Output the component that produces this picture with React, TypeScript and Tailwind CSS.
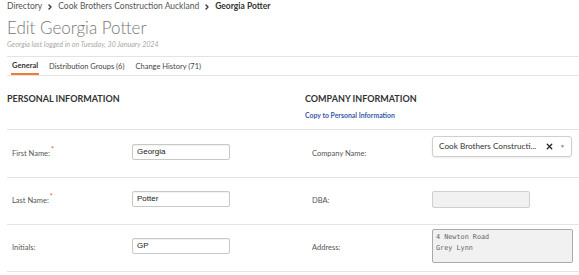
import { ChevronRight, X } from 'lucide-react'

const leftRows = [
  { label: 'First Name:', value: 'Georgia', required: true, h: 'h-[48px] border-t' },
  { label: 'Last Name:', value: 'Potter', required: true, h: 'h-[47px] border-t' },
  { label: 'Initials:', value: 'GP', required: false, h: 'h-[48px] border-y' },
]

const Label = ({ text, required }: { text: string; required?: boolean }) => (
  <span className="relative w-[120px] shrink-0 text-[7.5px] text-[#555]">
    {text}
    {required && <span className="absolute -top-[4px] ml-[1px] text-[7px] text-[#e8572a]">*</span>}
  </span>
)

const TextInput = ({ value }: { value: string }) => (
  <div className="mb-[4px] flex h-[16px] w-[98px] items-center rounded-[2px] border border-[#c8c8c8] bg-white px-[4px] font-['Liberation_Sans',Arial,sans-serif] text-[8px] text-[#222] shadow-[inset_0_1px_1px_rgba(0,0,0,0.06)]">
    {value}
  </div>
)

export default function App() {
  return (
    <div className="h-[275px] w-[579px] overflow-hidden bg-white font-['Lato','Open_Sans',sans-serif]">
      <div className="pl-[7px]">
        <div className="flex h-[13px] items-center gap-[4px] text-[8.5px] text-[#555]">
          <span>Directory</span>
          <ChevronRight className="h-[8px] w-[8px] text-[#333]" strokeWidth={4} />
          <span>Cook Brothers Construction Auckland</span>
          <ChevronRight className="h-[8px] w-[8px] text-[#333]" strokeWidth={4} />
          <span className="font-bold text-[#333]">Georgia Potter</span>
        </div>
        <h1 className="mt-[3px] h-[24px] text-[17px] font-light leading-[24px] text-[#777]">Edit Georgia Potter</h1>
        <p className="h-[10px] text-[7.1px] italic leading-[10px] text-[#aaa]">
          Georgia last logged in on Tuesday, 30 January 2024
        </p>
      </div>

      <div className="ml-[7px] mt-[6px] flex h-[20px] items-stretch border-y border-[#e3e3e3] pl-[4px] text-[7.5px] text-[#444]">
        <span className="flex items-center border-b-2 border-[#f07a36] px-[1px] pt-[1px] font-bold text-[#333]">General</span>
        <span className="ml-[10px] flex items-center pt-[1px]">Distribution Groups (6)</span>
        <span className="ml-[11px] flex items-center pt-[1px]">Change History (71)</span>
      </div>

      <div className="ml-[7px] grid grid-cols-[291px_1fr]">
        <section>
          <div className="h-[53px] pt-[17px] text-[9px] font-bold leading-[12px] text-[#333]">PERSONAL INFORMATION</div>
          {leftRows.map((row) => (
            <div key={row.label} className={`flex ${row.h} items-center border-[#e3e3e3] pl-[5px]`}>
              <Label text={row.label} required={row.required} />
              <TextInput value={row.value} />
            </div>
          ))}
        </section>

        <section>
          <div className="h-[53px] pl-[7px] pt-[17px]">
            <div className="text-[9px] font-bold leading-[12px] text-[#333]">COMPANY INFORMATION</div>
            <div className="mt-[5px] text-[6.9px] font-bold leading-[10px] text-[#3a5aa6]">Copy to Personal Information</div>
          </div>

          <div className="flex h-[48px] items-center border-t border-[#e3e3e3] pl-[14px]">
            <Label text="Company Name:" />
            <div className="mb-[14px] flex h-[21px] w-[140px] items-center rounded-[3px] border border-[#cfcfcf] bg-white pl-[6px] pr-[6px] text-[8.2px] text-[#333] shadow-[0_1px_2px_rgba(0,0,0,0.08)]">
              <span className="whitespace-nowrap">Cook Brothers Constructi...</span>
              <X className="ml-auto h-[9px] w-[9px] text-[#222]" strokeWidth={3.5} />
              <span className="ml-[6px] text-[5px] text-[#888]">▼</span>
            </div>
          </div>

          <div className="flex h-[47px] items-center border-t border-[#e3e3e3] pl-[14px]">
            <Label text="DBA:" />
            <div className="mb-[4px] h-[17px] w-[98px] rounded-[2px] border border-[#cfcfcf] bg-[#f1f1f1]" />
          </div>

          <div className="flex h-[48px] items-center border-y border-[#e3e3e3] pl-[14px]">
            <Label text="Address:" />
            <div className="mb-[4px] h-[34px] w-[141px] rounded-[2px] border border-[#a9a9a9] bg-[#f1f1f1] px-[3px] pt-[2px] font-['DejaVu_Sans_Mono',monospace] text-[6.8px] leading-[10.5px] text-[#666]">
              <div>4 Newton Road</div>
              <div>Grey Lynn</div>
            </div>
          </div>
        </section>
      </div>
    </div>
  )
}
